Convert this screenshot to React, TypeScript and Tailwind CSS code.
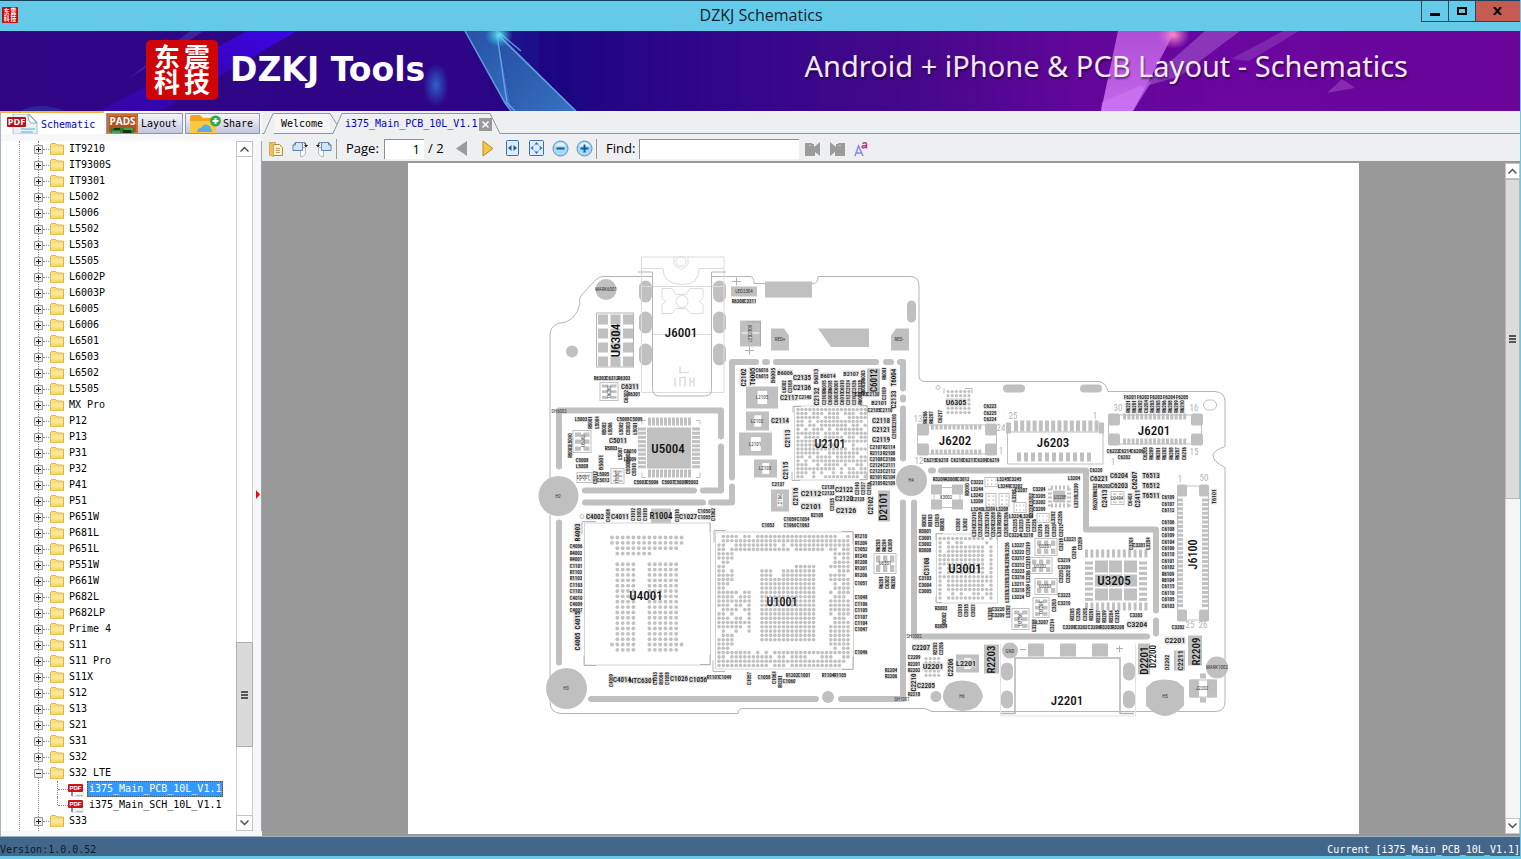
import React from 'react';

const TREE = [
  'IT9210', 'IT9300S', 'IT9301', 'L5002', 'L5006', 'L5502', 'L5503', 'L5505', 'L6002P', 'L6003P', 'L6005', 'L6006',
  'L6501', 'L6503', 'L6502', 'L5505', 'MX Pro', 'P12', 'P13', 'P31', 'P32', 'P41', 'P51', 'P651W', 'P681L', 'P651L',
  'P551W', 'P661W', 'P682L', 'P682LP', 'Prime 4', 'S11', 'S11 Pro', 'S11X', 'S12', 'S13', 'S21', 'S31', 'S32',
];

/* ---------- icons ---------- */

function FolderIcon() {
  return (
    <svg width="14" height="13" viewBox="0 0 14 13" className="shrink-0">
      <path d="M.5 11.5v-10l1-1h4l1.500 1.500h6.500v9.500z" fill="#f7dc7c" stroke="#dcb748" />
      <path d="M1 4.500h12v6.500H1z" fill="#fbe795" />
      <path d="M1 8.500h12v3H1z" fill="#f3d163" opacity=".7" />
    </svg>
  );
}

function PdfIcon({ small }: { small?: boolean }) {
  return small ? (
    <svg width="17" height="16" viewBox="0 0 17 16" className="shrink-0">
      <path d="M4 8h11v7.500H4z" fill="#eef6fa" stroke="#d5e4ea" />
      <path d="M8 14.500h7" stroke="#8fc6e0" />
      <path d="M4 10v5" stroke="#333" />
      <rect x="0" y="3" width="15" height="8" rx="1" fill="#c4161c" />
      <text x="7.500" y="9" fontSize="6" fontWeight="bold" fill="#fff" textAnchor="middle" className="font-['Liberation_Sans',sans-serif]">PDF</text>
    </svg>
  ) : (
    <svg width="32" height="20" viewBox="0 0 32 20" className="shrink-0">
      <path d="M6 0h16l8 8v12H6z" fill="#e9f1f6" stroke="#a8c0cc" />
      <path d="M21 0l9 9h-6q-3-1-3-9" fill="#fdfefe" stroke="#8aa9b8" />
      <path d="M14 15h14M14 18h12" stroke="#9fd0e6" strokeWidth="2" />
      <rect x="0" y="3" width="19" height="10" rx="1" fill="#b5121b" />
      <text x="9.500" y="11" fontSize="9" fontWeight="bold" fill="#fff" textAnchor="middle" className="font-['Open_Sans',sans-serif]">PDF</text>
    </svg>
  );
}

function PadsIcon() {
  return (
    <svg width="31" height="20" viewBox="0 0 31 20" className="shrink-0">
      <path d="M0 0h31v20H0z" fill="#b5511d" />
      <path d="M1 1h29v18H1z" fill="none" stroke="#d98a4f" />
      <text x="15.500" y="11" fontSize="10" fontWeight="bold" fill="#fff" textAnchor="middle" className="font-['Open_Sans',sans-serif]">PADS</text>
      <path d="M4 20v-6h23v6z" fill="#2d7a2a" />
      <path d="M7 14h6v2H7zM16 16h8v4h-8z" fill="#143314" />
      <path d="M5 18h8M17 15h9" stroke="#6fc45c" />
    </svg>
  );
}

function CloudFolderIcon() {
  return (
    <svg width="32" height="20" viewBox="0 0 32 20" className="shrink-0">
      <path d="M1 3q0-2 2-2h8l3 3h11q2 0 2 2v14H1z" fill="#f3a51f" />
      <path d="M1 7h26v13H1z" fill="#ffc83d" />
      <path d="M8 18q0-4 4-4 2-5 7-3 3 1 3 4 2 1 1 3z" fill="#5aaee8" />
      <circle cx="26.500" cy="7" r="5.500" fill="#35a852" />
      <path d="M26.500 4v6M23.500 7h6" stroke="#fff" strokeWidth="2" />
    </svg>
  );
}

function OpenIcon() {
  return (
    <svg width="16" height="16" viewBox="0 0 16 16">
      <path d="M1.500 1.500h6v13h-6z" fill="#f4cf7d" stroke="#dba950" />
      <path d="M5.500 3.500h6l3 3v8h-9z" fill="#fdf3d6" stroke="#b08b4a" />
      <path d="M8 7.500h4M8 9.500h4M8 11.500h4" stroke="#c49b55" />
      <path d="M1.500 1.500l4 2v12l-4-1.500z" fill="#f0be5c" stroke="#dba950" />
    </svg>
  );
}

function RotateIcon({ flip }: { flip?: boolean }) {
  return (
    <svg width="18" height="16" viewBox="0 0 18 16" className={flip ? '-scale-x-100' : ''}>
      <path d="M9.500 6.500h5v6l-2.500 3H9.500z" fill="#fafafa" stroke="#b5b5b5" />
      <path d="M4.500 1.500h7v8h-9.500v-5.500z" fill="#cfe4f8" stroke="#5f86b3" />
      <path d="M2 4h2.500v-2.500" fill="none" stroke="#5f86b3" />
      <path d="M12.500 1.500q2.500 0 2.500 3" fill="none" stroke="#222" />
      <path d="M13 4h4l-2 2.500z" fill="#222" />
    </svg>
  );
}

function TriIcon({ right }: { right?: boolean }) {
  return right ? (
    <svg width="12" height="17" viewBox="0 0 12 17">
      <path d="M1 1l10 7.500L1 16z" fill="#f3c544" stroke="#b88a22" />
    </svg>
  ) : (
    <svg width="12" height="17" viewBox="0 0 12 17">
      <path d="M11 1v15L0 8.500z" fill="#9b9b9b" />
    </svg>
  );
}

function FitIcon({ page }: { page?: boolean }) {
  return (
    <svg width="15" height="17" viewBox="0 0 15 17">
      <rect x={page ? 0.5 : 1.5} y=".5" width={page ? 14 : 12} height="15" rx="1" fill="#dcecfb" stroke="#3f6ea3" />
      {page ? (
        <>
          <path d="M7.500 2l2 2.500h-4zM7.500 14l2-2.500h-4zM1.500 8l2.500-2v4zM13.500 8L11 6v4z" fill="#2d6da8" />
          <circle cx="7.500" cy="8" r="3.500" fill="none" stroke="#6f9ccb" strokeDasharray="2 1" />
        </>
      ) : (
        <path d="M3 8l3.500-3v6zM12 8L8.500 5v6z" fill="#1c5f9e" />
      )}
    </svg>
  );
}

function ZoomIcon({ plus }: { plus?: boolean }) {
  return (
    <svg width="17" height="17" viewBox="0 0 17 17">
      <circle cx="8.500" cy="8.500" r="7.500" fill="#a9d9f7" stroke="#5f8fb8" />
      <path d="M3 6q5.500-7 11 0z" fill="#e4f4fd" />
      <path d={plus ? 'M4.500 8.500h8M8.500 4.500v8' : 'M4.500 8.500h8'} stroke="#0d5f9e" strokeWidth="2" />
    </svg>
  );
}

function FindIcon({ next }: { next?: boolean }) {
  return (
    <svg width="16" height="16" viewBox="0 0 16 16" className={next ? '-scale-x-100' : ''}>
      <path d="M0 2h7v1h2v3l6-5v14l-5-4v4H0z" fill="#9b9b9b" />
      <path d="M4 4h2v1H4z" fill="#c9c9c9" />
    </svg>
  );
}

function SealLogo({ small }: { small?: boolean }) {
  return (
    <svg width={small ? 16 : 72} height={small ? 16 : 60} viewBox="0 0 72 60" preserveAspectRatio="none" className="shrink-0 overflow-visible">
      <rect width="72" height="60" rx="5" fill="#cf0406" />
      <g fill="#fff" fontWeight="700" fontSize="26" textAnchor="middle" className="font-['Noto_Sans_CJK_SC',sans-serif]">
        <text x="21" y="27">东</text>
        <text x="51" y="27">震</text>
        <text x="21" y="52">科</text>
        <text x="51" y="52">技</text>
      </g>
    </svg>
  );
}

/* ---------- window chrome ---------- */

function TitleBar() {
  return (
    <header className="flex h-[31px] shrink-0 items-start border-t border-[#17405a] bg-[#65cae8]">
      <div className="flex flex-1 pl-[2px] pt-[6px]"><SealLogo small /></div>
      <h1 className="pt-[3px] font-['Open_Sans',sans-serif] text-[16px] leading-[22px] text-[#10242e]">DZKJ Schematics</h1>
      <div className="flex flex-1 justify-end">
        <button aria-label="Minimize" className="flex h-[21px] w-[28px] items-center justify-center border border-t-0 border-[#274a58]">
          <svg width="10" height="10"><path d="M0 7h10v3H0z" /></svg>
        </button>
        <button aria-label="Maximize" className="flex h-[21px] w-[26px] items-center justify-center border-b border-[#274a58]">
          <svg width="10" height="8"><path d="M1 1h8v6H1z" fill="none" stroke="#000" strokeWidth="2" /></svg>
        </button>
        <button aria-label="Close" className="flex h-[21px] w-[45px] items-center justify-center border-b border-l border-[#274a58] bg-[#c75b52]">
          <svg width="10" height="8"><path d="M1 0l7 8M8 0L1 8" stroke="#000" strokeWidth="2" /></svg>
        </button>
      </div>
    </header>
  );
}

function Banner() {
  return (
    <div className="relative flex h-20 shrink-0 items-center overflow-hidden">
      <svg viewBox="0 0 1520 80" preserveAspectRatio="none" className="absolute inset-0 h-full w-full">
        <defs>
          <linearGradient id="bg">
            <stop offset="0" stopColor="#300685" />
            <stop offset=".31" stopColor="#2d0585" />
            <stop offset=".37" stopColor="#1b0680" />
            <stop offset=".44" stopColor="#2c0588" />
            <stop offset=".6" stopColor="#45088a" />
            <stop offset=".72" stopColor="#64069a" />
            <stop offset=".8" stopColor="#6b06a0" />
            <stop offset="1" stopColor="#6a0598" />
          </linearGradient>
          <linearGradient id="beam" x1="1" y1="0" x2="0" y2="1">
            <stop offset="0" stopColor="#3c05e6" />
            <stop offset=".6" stopColor="#3604b0" />
            <stop offset="1" stopColor="#3606a8" />
          </linearGradient>
          <linearGradient id="teal" x1="0" y1="0" x2="1" y2="1">
            <stop offset="0" stopColor="#2b4fa8" />
            <stop offset=".5" stopColor="#2c5fae" />
            <stop offset="1" stopColor="#3a72c4" />
          </linearGradient>
          <linearGradient id="pink" x1="0" y1="0" x2="0" y2="1">
            <stop offset="0" stopColor="#b04fd6" />
            <stop offset="1" stopColor="#c468ec" />
          </linearGradient>
          <radialGradient id="glow"><stop offset="0" stopColor="#2f6ed0" stopOpacity=".9" /><stop offset="1" stopColor="#2f5ed0" stopOpacity="0" /></radialGradient>
          <radialGradient id="spark"><stop offset="0" stopColor="#63e0ee" /><stop offset="1" stopColor="#3ec6ee" stopOpacity="0" /></radialGradient>
          <radialGradient id="rose"><stop offset="0" stopColor="#ff8bc8" /><stop offset="1" stopColor="#e070d8" stopOpacity="0" /></radialGradient>
        </defs>
        <path d="M0 0h1520v80H0z" fill="url(#bg)" />
        <path d="M247 0h50L160 80h-60z" fill="url(#beam)" />
        <path d="M190 0h14l-76 48z" fill="#4b32a8" opacity=".6" />
        <path d="M465 0h32l15 80L505 72z" fill="url(#teal)" />
        <path d="M497 0l79 80h-64z" fill="url(#teal)" />
        <path d="M497 0l42 0 0 42z" fill="#1a1590" opacity=".6" />
        <path d="M465 0l40 72 6 8M497 3l10 69 8 8M497 3l79 77M497 0l24 20" fill="none" stroke="#6fb4f0" strokeWidth="1.500" opacity=".8" />
        <ellipse cx="436" cy="54" rx="13" ry="22" fill="url(#glow)" />
        <ellipse cx="499" cy="4" rx="14" ry="12" fill="url(#spark)" />
        <path d="M20 80q20-10 45 0z" fill="#2a5fb0" opacity=".35" />
        <path d="M1118 0h57l-42 80h-32z" fill="url(#pink)" />
        <path d="M1102 71l50-21-19 30h-32z" fill="#cf78f5" opacity=".6" />
        <path d="M1205 0h35l-60 45-40 12z" fill="#a55fce" opacity=".55" />
        <path d="M1283 0h16l-50 30-18-2z" fill="#a55fce" opacity=".35" />
        <path d="M1342 48l13 9-28 5z" fill="#9a45bd" opacity=".6" />
        <ellipse cx="1174" cy="4" rx="16" ry="14" fill="url(#rose)" />
      </svg>
      <div className="relative flex w-full items-center pb-[2px] pl-[146px] pr-[112px]">
        <SealLogo />
        <span className="ml-[12px] font-['DejaVu_Sans',sans-serif] text-[33px] font-bold leading-10 text-white">DZKJ Tools</span>
        <span className="ml-auto pb-[8px] font-['Noto_Sans',sans-serif] text-[29px] leading-9 text-[#f4e9fb] [text-shadow:1px_2px_2px_#00000080]">
          Android + iPhone &amp; PCB Layout - Schematics
        </span>
      </div>
    </div>
  );
}

function ArrowButton({ down }: { down?: boolean }) {
  return (
    <button aria-label={down ? 'Scroll down' : 'Scroll up'} className="flex h-[16px] w-full shrink-0 items-center justify-center border border-[#c4c4c4] bg-white">
      <svg width="9" height="6"><path d={down ? 'M.5 .5l4 4 4-4' : 'M.5 5.500l4-4 4 4'} fill="none" stroke="#505050" strokeWidth="1.500" /></svg>
    </button>
  );
}

function Grip() {
  return <svg width="7" height="8"><path d="M0 1h7M0 4h7M0 7h7" stroke="#555" strokeWidth="2" /></svg>;
}

function TreeRow({ label, open }: { label?: string; open?: boolean }) {
  return (
    <li className="flex h-4 items-center">
      <button aria-label={open ? 'Collapse' : 'Expand'} className="ml-[34px] shrink-0 bg-white">
        <svg width="9" height="9">
          <path d="M.5 .5h8v8h-8z" fill="#eee" stroke="#999" />
          <path d={open ? 'M2 4.500h5' : 'M2 4.500h5M4.500 2v5'} stroke="#222" />
        </svg>
      </button>
      <span className="mr-px w-[6px] border-t border-dotted border-[#888]" />
      <FolderIcon />
      <span className="ml-[5px] whitespace-pre">{label}</span>
    </li>
  );
}

function FileRow({ label, selected, last }: { label: string; selected?: boolean; last?: boolean }) {
  return (
    <li className="flex h-4 items-center">
      <span className={`ml-[57px] w-0 self-start border-l border-dotted border-[#888] ${last ? 'h-2' : 'h-4'}`} />
      <span className="w-[10px] border-t border-dotted border-[#888]" />
      <PdfIcon small />
      {selected ? (
        <span className="ml-[2px] border border-dotted border-[#7a4b10] bg-[#3399ff] px-px leading-[14px] text-white">{label}</span>
      ) : (
        <span className="ml-1">{label}</span>
      )}
    </li>
  );
}

function Sidebar() {
  const tab = 'flex items-center overflow-hidden border border-[#8c97b0] bg-gradient-to-b from-[#f6f6fa] to-[#c4c6dc]';
  return (
    <aside className="flex w-[262px] shrink-0 flex-col bg-[#f7f7fa]">
      <div className="flex h-[23px] shrink-0 items-end gap-[2px] text-[10px]">
        <button className="flex h-[23px] w-[104px] items-center gap-[2px] overflow-hidden border-l border-t-2 border-l-[#a9b4bf] border-t-[#f5b13d] bg-white pl-[6px] pt-px text-[#0000c8]">
          <PdfIcon />Schematic
        </button>
        <button className={`${tab} h-[21px] w-[77px] gap-[3px]`}><PadsIcon />Layout</button>
        <button className={`${tab} h-[21px] w-[75px] gap-[2px] pl-[3px]`}><CloudFolderIcon />Share</button>
      </div>
      <div className="flex min-h-0 flex-1 border-l border-[#a9b4bf] pb-[5px] pt-[7px]">
        <div className="relative -ml-px min-w-0 flex-1 overflow-hidden border-l border-[#a9b4bf] bg-white text-[10px] leading-4">
          <span className="absolute inset-y-0 left-[18px] border-l border-dotted border-[#888]" />
          <span className="absolute inset-y-0 left-[37px] border-l border-dotted border-[#888]" />
          <ul className="absolute inset-x-0 -left-px top-0">
            {TREE.map((t, i) => <TreeRow key={i} label={t} />)}
            <TreeRow label="S32 LTE" open />
            <FileRow label="i375_Main_PCB_10L_V1.1" selected />
            <FileRow label="i375_Main_SCH_10L_V1.1" last />
            <TreeRow label="S33" />
            <TreeRow />
          </ul>
        </div>
        <div className="flex w-[17px] shrink-0 flex-col bg-white">
          <ArrowButton />
          <div className="grow-[487] basis-0 border-x border-[#d0d0d0]" />
          <div className="flex grow-[104] basis-0 items-center justify-center border border-[#b0b0b0] bg-[#dadada]"><Grip /></div>
          <div className="grow-[68] basis-0 border-x border-[#d0d0d0]" />
          <ArrowButton down />
        </div>
        <div className="flex w-[9px] shrink-0 items-center justify-end border-r border-[#9aa7b0] pt-4">
          <svg width="6" height="9"><path d="M1 0l4 4.500L1 9z" fill="#e01010" /></svg>
        </div>
      </div>
    </aside>
  );
}

function DocTabs() {
  return (
    <div className="flex h-[23px] shrink-0 items-end text-[10px] leading-5">
      <svg width="12" height="21" className="shrink-0"><path d="M0 20.500h2L11 .5h1" fill="#f5f5f5" stroke="#8799a3" /></svg>
      <button className="h-[21px] w-[56px] whitespace-nowrap border-y border-[#8799a3] bg-[#f5f5f5] pl-[7px] text-left text-black">Welcome</button>
      <svg width="13" height="21" className="shrink-0">
        <path d="M0 .5l7 11" fill="none" stroke="#8799a3" />
        <path d="M0 20.500h3L12 .5h1" fill="none" stroke="#8799a3" />
      </svg>
      <div className="flex h-[21px] w-[147px] items-center gap-[2px] border-t border-[#8799a3] pl-[2px] text-[#0000c8]">
        <button className="whitespace-nowrap">i375_Main_PCB_10L_V1.1</button>
        <button aria-label="Close tab" className="flex h-[13px] w-[13px] shrink-0 items-center justify-center bg-[#999]">
          <svg width="7" height="7"><path d="M.5 .5l6 6M6.500 .5l-6 6" stroke="#fff" strokeWidth="1.500" /></svg>
        </button>
      </div>
      <svg width="13" height="21" className="shrink-0"><path d="M0 .5l10 20h3" fill="none" stroke="#8799a3" /></svg>
      <div className="flex-1 border-b border-[#8799a3]" />
    </div>
  );
}

function Tool({ label, children }: { label: string; children: React.ReactNode }) {
  return <button aria-label={label} className="flex h-6 w-6 shrink-0 items-center justify-center">{children}</button>;
}

function Toolbar() {
  return (
    <div className="flex h-[29px] shrink-0 items-center border-b-2 border-[#999] pl-[2px] pt-[2px] font-['Open_Sans',sans-serif] text-[13px] text-black">
      <Tool label="Open"><OpenIcon /></Tool>
      <Tool label="Rotate right"><RotateIcon /></Tool>
      <Tool label="Rotate left"><RotateIcon flip /></Tool>
      <span className="h-5 w-px bg-[#999]" />
      <label htmlFor="page" className="ml-[9px] w-[38px]">Page:</label>
      <input id="page" defaultValue="1" className="h-5 w-10 border-l border-t border-[#8d8d8d] bg-white pr-1 text-right outline-none" />
      <span className="ml-[4px] w-[18px] whitespace-nowrap">/ 2</span>
      <span className="w-1" />
      <Tool label="Previous page"><TriIcon /></Tool>
      <span className="w-[2px]" />
      <Tool label="Next page"><TriIcon right /></Tool>
      <Tool label="Fit width"><FitIcon /></Tool>
      <Tool label="Fit page"><FitIcon page /></Tool>
      <Tool label="Zoom out"><ZoomIcon /></Tool>
      <Tool label="Zoom in"><ZoomIcon plus /></Tool>
      <span className="h-5 w-px bg-[#999]" />
      <label htmlFor="find" className="ml-[9px] w-[33px]">Find:</label>
      <input id="find" className="h-5 w-40 border-l border-t border-[#8d8d8d] bg-white px-1 outline-none" />
      <span className="w-[2px]" />
      <Tool label="Find previous"><FindIcon /></Tool>
      <Tool label="Find next"><FindIcon next /></Tool>
      <Tool label="Match case">
        <svg width="14" height="16" viewBox="0 0 14 16">
          <path d="M1 15L4.500 5 9 15M2.500 12h5" fill="none" stroke="#8a86e8" strokeWidth="1.500" />
          <path d="M8.500 2.500q4-2 4 1v4M12 4.500q-4 0-4 1.500 1 2 4 0" fill="none" stroke="#b23a9a" strokeWidth="1.500" />
        </svg>
      </Tool>
    </div>
  );
}

/* ---------- board drawing ---------- */

const G = '#c0c0c0';

const SLOTS = [
  'M559 466V410H721V436', 'M721 446V490H703', 'M585 490H694', 'M585 502H703', 'M711 502H732V486', 'M732 477V361.500H756',
  'M765 361.500h2', 'M776 361.500H876', 'M886 361.500h5', 'M900 361.500H903V388', 'M903 397v2', 'M903 408V458',
  'M559 522V662', 'M591 698.500H816', 'M841 698.500H903', 'M903 502V698', 'M914 502V636H1147', 'M931 470h2', 'M941 470H1086V529H1156V610',
  'M1156 620V633',
];

/* x, y, size, vertical, name */
const BIG = `681 332 13 0 J6001
615 340 13 1 U6304
668 448 13 0 U5004
830 443 12 0 U2101
646 595 13 0 U4001
782 601 12 0 U1001
965 568 13 0 U3001
1114 580 13 0 U3205
955 440 13 0 J6202
1053 442 13 0 J6203
1154 430 13 0 J6201
1193 554 12 1 J6100
1067 700 13 0 J2201
956 402 8 0 U6305
933 666 8 0 U2201
966 663 8 0 L2201
883 506 11 1 D2101
991 659 11 1 R2203
1196 651 11 1 R2209
1144 660 11 1 D2201
1153 656 9 1 D2200
1180 660 8 1 C2211
1167 662 6 1 D2202
1175 640 8 0 C2201
1137 624 8 0 C3204
661 515 9 0 R1004
595 516 7 0 C4002
620 516 7 0 C4011
688 516 7 0 C1027
874 380 9 1 C6012
893 377 7 1 T6004
893 399 7 1 C2133
743 377 7 1 C2102
752 376 7 1 T6005
773 375 6 1 B6005
785 372 6 0 B6006
802 377 7 0 C2135
802 387 7 0 C2136
789 397 7 0 C2117
816 396 7 1 C2132
816 376 6 1 B6013
828 375 6 0 B6014
851 373 6 0 B2107
780 420 7 0 C2114
787 438 7 1 C2113
785 470 7 1 C2115
795 496 7 1 C2116
881 420 7 0 C2118
881 429 7 0 C2121
881 439 7 0 C2119
879 402 6 0 B2101
811 493 8 0 C2112
811 506 8 0 C2101
844 489 7 0 C2122
844 498 7 0 C2120
846 510 8 0 C2126
870 505 7 1 C2102
630 386 7 0 C6311
618 440 7 0 C5011
601 462 6 1 B5001
577 532 7 1 R4003
577 620 7 1 C4015
577 641 7 1 C4005
622 679 7 0 C4014
642 680 7 0 NTC6301
679 678 7 0 C1026
698 679 7 0 C1056
1099 478 7 0 C6221
1119 475 7 0 C6204
1119 485 7 0 C6203
1134 480 7 1 C6207
1151 475 7 0 T6513
1151 485 7 0 T6512
1151 495 7 0 T6511
1104 498 7 1 C2413
1137 498 7 1 C2411
1095 502 6 1 R6201
1214 496 6 1 T6101
926 566 7 1 C3108
921 647 7 0 C2207
950 667 7 1 C2206
926 685 7 0 C2205
913 682 7 1 C2210`;

/* x, y, dx, dy, vertical, names */
const SMALL = `600 378 12 0 0 R6303 C6312 R6303
626 396 0 0 1 C6302
634 394 0 0 0 R6301
738 301 12 0 0 R6300 C3311
623 419 13 0 0 C5008 C5009
581 419 0 0 0 L5003
590 422 7 0 1 R5001 L5004
621 428 7 0 1 L5002 C5003 L5001
604 428 6 0 1 R5002 L5006
570 439 0 12 1 L5010 R5002
582 460 0 6 0 C5008 L5008
611 448 0 0 0 R5003
620 453 8 4 1 L5007 C5002
630 451 0 8 0 C5010 L5009
603 474 0 6 0 L5005 C5013
595 477 0 0 1 C5012
628 467 6 2 1 C5004 C5010
640 482 12 0 0 C5003 C5006
668 482 12 0 0 C5007 C5008 R5003
762 370 0 6 0 C6016 C6015
784 386 6 0 1 L6002 C2108
805 397 0 0 0 C2140
824 386 6 0 1 R6015 R6018 C6001 C6010
824 398 6 0 1 C2101 C6002 C6007 C6010
848 386 6 0 1 C2124 C2126 C2128
848 398 6 0 1 C2127 C2102 R6008
863 376 0 12 1 R6003 R6002
884 373 0 20 1 R6001 C2109
861 394 12 0 0 C2123 C2130
874 410 12 0 0 C2105 C2110
894 420 0 12 1 C2100 C2103
876 447 0 6 0 C2107 R2113 C2108 C2124 C2123 R2101 C2105
889 447 0 6 0 R2114 R2108 C2106 C2111 C2112 R2104 R2109
828 487 0 6 0 C2138 C2133
857 488 6 0 1 C2140 C2127 C2126
858 499 0 0 0 C2128
832 504 0 0 1 C2125
778 484 0 0 0 C2137
790 519 13 0 0 C1059 C1054
790 525 13 0 0 C1060 C1063
768 525 0 0 0 C1053
817 515 0 0 0 R2108
608 515 0 0 1 C4008
633 514 6 0 1 C1012 C1003 C1010
677 515 0 0 1 C1010
704 511 0 6 0 C1050 C1055
713 514 0 0 1 C1062
576 546 0 6.4 0 C4006 R4002 R4001 C1101 R1102 R1103 C1103 C1102 C4010 C4009 C4007
611 680 0 0 1 C4009
655 678 6 0 1 C1013 R1004 C1058
713 677 12 0 0 R1101 C1049
749 678 0 0 1 C1057
764 677 0 0 0 C1058
774 677 6 4 1 C1061 R1201
792 675 12 0 0 R1202 C1001
789 681 0 0 0 C1060
828 675 12 0 0 R1104 R1105
861 536 0 6.4 0 R1210 R1209 C1052 R1245 R1208 R1201 R1206
861 583 0 0 0 C1051
861 597 0 6.4 0 C1048 C1106 C1105 C1107 C1104 C1047
861 652 0 0 0 C1046
878 545 6 0 1 R6203 R6204 C6308
881 582 6 0 1 R6201 C6302 R6203
891 670 0 6 0 R2204 R2206
925 417 6 0 1 R6206 R6207
940 416 0 0 1 C6217
990 406 0 6.5 0 C6223 C6225 C6224
930 460 12 0 0 C6215 C6218
957 460 12 0 0 C6210 C6211 C6209 C6219
1130 397 13 0 0 F6201 F6202 F6203 F6204 F6205
1128 406 6 0 1 R6221 R6201 R6202 C6204 R6203 R6205 R6206 R6208 R6209 R6210
1113 451 12 0 0 C6222 C6214 C6206
1124 457 0 0 0 C6202
1145 453 6.5 0 1 C6205 R6209 R6201 R6202 R6208 R6207 C6216
1168 497 0 6.5 0 C6109 C6107 C6112
1168 522 0 6.4 0 C6106 C6108 C6109 C6104 C6106 C6110 C6101 C6102 R6109 R6104 C6115 C6110 C6105 C6103
1096 470 0 0 0 C6220
1095 489 0 0 1 R6202
1104 486 0 0 0 R6202
1130 499 0 0 1 C6401
939 479 12 0 0 R3209 R3008 C3012
967 489 0 0 1 R3010
977 482 0 6.5 0 C3222 L3244 L3243
1003 479 12 0 0 L3245 C3245
1004 486 12 0 0 L3249 C3202
977 501 0 8 0 L3209 L3240
989 509 13 0 0 L3209 L3208
974 518 6.4 0 1 C3210 C3209 C3210 C3208 R3209 C3206
974 530 6.4 0 1 L3242 C3232 L3225 C3209 L3207 C3208
924 520 6.4 0 1 R3002 R3103 C3103
942 524 0 0 1 R3003
958 524 7 0 1 C3001 L3002
925 531 0 6.3 0 R3001 C3001 C3002 R3008
925 578 0 6.3 0 C3103 C3004 C3005
941 608 0 18 0 R3003 R3004
944 618 0 0 1 R3002
960 610 6.4 0 1 C3018 C3015 C3021
990 613 0 0 1 L3208
998 609 0 6 0 C3220 C3209
1008 611 0 0 1 L3202
1015 516 12 0 0 L3224 L3204
1015 525 6.4 0 1 C3225 L3223 C3214 C3226
1015 535 12 0 0 C3224 L3218
1018 545 0 6.4 0 L3227 L3222 C3217 C3212 C3223 C3216 L3211 C3218 L3224
1007 548 0 12 1 L3226 L3209 L3204 L3205 L3203
1028 548 0 14 1 C3219 C3215 L3206 C3209
1014 495 0 0 1 L3205
1021 490 0 0 0 C3207
1031 499 0 12 1 C3202 C3220
1039 489 0 6.4 0 C3204 C3205 C3202 C3209
1074 478 0 0 0 L3204
1076 489 0 12 1 L3239 L3218
1053 517 7 0 1 L3202 C3206
1040 530 7 0 1 C3216 L3228 C3230 C3212
1061 544 0 0 1 C3218
1070 539 0 0 0 L3221
1074 552 6 -9 1 C3216 C3209
1064 560 0 7 0 C3219 C3209
1061 576 7 0 1 C3220 C3202
1064 595 0 8 0 C3223 C3210
1054 605 0 0 1 C3203
1042 622 0 0 0 L3207
1034 625 18 0 1 L3208 C3214
1131 543 17 0 1 C3201 L3204
1139 545 0 0 0 C3201
1072 614 6.4 0 1 R3205 C3206 C3205 R3201
1069 627 12 0 0 C3208 C3202
1098 616 6.4 0 1 R3207 R3209 R3204 C3215
1094 627 12 0 0 C3206 R3203 R3208
1136 615 0 0 0 C3203
1178 627 0 0 0 C3202
914 657 0 6.4 0 C2209 R2201 R2202
935 648 6 0 1 R2202 C2206
914 694 0 0 0 R2218`;

function Label({ x, y, s, v, t }: { x: number; y: number; s: number; v: boolean; t: string }) {
  return (
    <text x={x} y={y + s * 0.36} fontSize={s} textAnchor="middle" transform={v ? `rotate(-90 ${x} ${y})` : undefined}>{t}</text>
  );
}

function Balls({ x, y, cols, rows, step, r = 1.6, keep }: { x: number; y: number; cols: number; rows: number; step: number; r?: number; keep?: (c: number, r: number) => boolean }) {
  const dots: React.ReactNode[] = [];
  for (let j = 0; j < rows; j++)
    for (let i = 0; i < cols; i++)
      if (!keep || keep(i, j)) dots.push(<circle key={`${i}-${j}`} cx={x + i * step} cy={y + j * step} r={r} />);
  return <g fill={G}>{dots}</g>;
}

function Pins({ x, y, n, dx = 0, dy = 0, w, h }: { x: number; y: number; n: number; dx?: number; dy?: number; w: number; h: number }) {
  return <g fill={G}>{Array.from({ length: n }, (_, i) => <rect key={i} x={x + i * dx} y={y + i * dy} width={w} height={h} />)}</g>;
}

const noise = (i: number, j: number) => (((i * 7919 + j * 10473 + i * i * 31 * (j + 2) + j * j * 17) % 97) / 97);

function socKeep(i: number, j: number) {
  const d = Math.min(i, j, 30 - i, 30 - j);
  if (i >= 10 && i <= 22 && j >= 10 && j <= 24) return true;
  if (j >= 8 && j < 10) {
    if (i >= 10 && i <= 22) return i > 14 || i < 13;
  }
  if (j === 7 && i > 17 && i < 23) return true;
  if (d < 4) return d === 1 || noise(i, j) > 0.2;
  if (i < 8 && j > 12 && j < 23) return i === 7 || noise(i, j) > 0.35;
  if (i > 25 && j > 5 && j < 26) return noise(i, j) > 0.2;
  return false;
}

function memKeep(i: number, j: number) {
  if (j < 2) return true;
  if (j === 2) return i > 0 && i < 13;
  if (j === 3) return i > 0 && i < 8;
  if (j === 4) return false;
  if (j === 20) return i < 5 || i > 6;
  return (i > 0 && i < 5) || (i > 6 && i < 13);
}

function MiniChip({ x, y, w, h }: { x: number; y: number; w: number; h: number }) {
  const nx = w > h ? 3 : 2;
  const ny = w > h ? 2 : 3;
  return (
    <g>
      <rect x={x} y={y} width={w} height={h} fill="none" stroke={G} />
      {Array.from({ length: nx * ny }, (_, k) => (
        <rect key={k} x={x + 2 + (k % nx) * ((w - 1) / nx)} y={y + 2 + Math.floor(k / nx) * ((h - 1) / ny)} width={w / nx - 3} height={h / ny - 3} fill={G} />
      ))}
    </g>
  );
}

function Board() {
  const big = BIG.split('\n').map((l) => l.split(' '));
  const small = SMALL.split('\n').flatMap((l) => {
    const [x, y, dx, dy, v, ...names] = l.split(' ');
    return names.map((t, i) => ({ x: +x + i * +dx, y: +y + i * +dy, v: v === '1', t }));
  });
  const inductors = [[746, 386, 32, 22], [746, 411, 23, 19], [739, 432, 33, 23], [754, 459, 23, 18], [771, 489, 18, 22], [956, 654, 23, 18]];
  return (
    <svg viewBox="408 163 951 670" className="h-full w-full font-['Liberation_Sans_Narrow','Roboto_Condensed','Liberation_Sans',sans-serif]" role="img" aria-label="Board layout">
      <path d="M550 478V334Q550 326 558 323Q576 322 580 303Q578 298 583 293L596 279Q599 276 604 276H652M712 276H750Q754 276 754 283H813Q818 283 818 276H910Q919 276 919 285V375Q919 381 925 381H1099Q1106 382 1108 391H1215Q1225 392 1225 401V446Q1213 450 1213 455Q1213 461 1225 467V701Q1225 711 1215 711H932L925 708H743Q738 708 738 713H562Q550 713 550 701V514" fill="none" stroke="#b4b4b4" />
      <g stroke={G} strokeWidth="6" strokeLinecap="round" strokeLinejoin="round" fill="none">
        {SLOTS.map((d) => <path key={d} d={d} />)}
      </g>
      <g fill={G}>
        <circle cx="558.500" cy="495.500" r="20" /><circle cx="566.500" cy="688" r="20.500" /><circle cx="911.500" cy="480" r="15.500" />
        <circle cx="606" cy="289" r="10.500" /><circle cx="572" cy="351" r="6" /><circle cx="828" cy="696.500" r="6" />
        <circle cx="1010" cy="650" r="8" /><circle cx="936" cy="696" r="5.500" /><circle cx="1217" cy="667" r="11" />
        <path d="M949 683q13-6 27 0q6 6 7 13q-1 5-7 11q-13 7-27 0q-6-6-6-11q0-7 6-13zM1153 681q11-4 24 0l7 6v18q-19 21-38 0v-18z" />
        <rect x="765" y="281" width="47" height="16" /><rect x="731" y="286" width="26" height="10" />
        <rect x="907" y="300" width="9" height="22" rx="4.500" />
        <path d="M771 328h13l5 7v15h-18zM896 328h13v22h-18v-15zM818 328h51v18.500h-38z" />
        <rect x="1003" y="384" width="22" height="8" rx="4" /><rect x="1080" y="384" width="22" height="8" rx="4" />
        {inductors.map(([x, y, w, h]) => <rect key={y} x={x} y={y} width={w} height={h} />)}
        {[291, 322, 354].map((y) => <g key={y}><rect x="639" y={y - 11} width="13" height="22" rx="6.500" /><rect x="713" y={y - 11} width="13" height="22" rx="6.500" /></g>)}
        {[671, 699].map((y) => <g key={y}><rect x="1001" y={y - 9} width="12" height="18" rx="6" /><rect x="1123" y={y - 9} width="12" height="18" rx="6" /></g>)}
        <rect x="740" y="320" width="21" height="26" />
        <path d="M1028 643h16v13h-16zM1060 643h16v13h-16zM1092 643h16v13h-16z" />
        <path d="M651 508h20v15h-20zM878 490h12v31h-12zM984 644h15v29h-15zM1188 635h14v30h-14zM1138 643h12v31h-12zM867 368h13v24h-13zM1174 650h11v20h-11z" />
      </g>
      <g fill="#fff">
        {inductors.map(([x, y, w, h]) => <rect key={y} x={x + w * 0.36} y={y + h * 0.2} width={w * 0.3} height={h * 0.6} />)}
        <path d="M742 332h17v1h-17z" />
      </g>
      <path d="M746 321.500h14.500v24" fill="none" stroke="#aaa" />

      {/* J6001 audio jack */}
      <g fill="none" stroke="#dcdcdc">
        <path d="M641.500 256.500h82.500v135.500h-82.500zM641 286h83M653 334h59M641 268h22q0 15 18 16t18-16h25M674 256v8l7 5 7-5v-8M662 288h10l4 6h10l4-6h13v10l-4 3 4 3v9h-13l-4-5h-10l-4 5h-10v-9l4-3-4-3z" />
        <circle cx="681" cy="261" r="5" /><circle cx="682" cy="301" r="6" />
        <path d="M680 366v6h9M675 377v9M680 386v-9h5v9M690 377v9M694 377v9M690 381h4" strokeWidth="1.500" />
      </g>
      <path d="M638 271.500H652.500V388Q652.500 395.500 660 395.500H705Q711.500 395.500 711.500 388V271.500H726" fill="none" stroke="#b4b4b4" />
      <path d="M732 281h9M736.500 277v8M745 350h9M749.500 346v8M1020 649h6M1116 648h7M1119.500 645v7" stroke="#b0b0b0" fill="none" />

      {/* U6304 and U5004 packages */}
      <rect x="596.500" y="312.500" width="37" height="54" fill="none" stroke="#b4b4b4" />
      {[598, 610.5, 623].map((x) => <Pins key={x} x={x} y={314} n={4} dy={14} w={10} h={10} />)}
      <rect x="647" y="427" width="44" height="41" fill={G} />
      <Pins x={648} y={417} n={11} dx={4} w={3} h={8} /><Pins x={648} y={469} n={11} dx={4} w={3} h={8} />
      <Pins x={638} y={427} n={10} dy={4.2} w={8} h={3} /><Pins x={692} y={427} n={10} dy={4.2} w={8} h={3} />
      <path d="M642 424v-4h4M696 420h4v4M700 472v5h-4M646 477h-4v-5" fill="none" stroke={G} />

      {/* ball grid arrays */}
      <g fill="none" stroke="#d4d4d4">
        <path d="M584.500 522.500h126v142h-126zM794.500 405.500h73v74h-73zM715.500 531.500h138v137h-138zM936.500 533.500h61v69h-61z" />
      </g>
      <path d="M582 534v-13h14M710 522v10M584 655v10h12M700 664h10v-10M714 542v-12h12M842 531h11v12M713 660v11h12M842 669h11v-13M793 412v-6h8M860 405h7v8M792 471v9h8M860 479h7v-7M944 393v-5M965 388h7v5M936 540v-7h7M990 533h7v7M936 596v6h6" fill="none" stroke="#b4b4b4" />
      <Balls x={612} y={537} cols={14} rows={22} step={5.35} r={1.9} keep={memKeep} />
      <Balls x={719} y={536} cols={31} rows={31} step={4.3} r={1.8} keep={socKeep} />
      <Balls x={798} y={409} cols={18} rows={18} step={3.95} r={1.7} keep={(i, j) => noise(i + 3, j + 5) > 0.2 || i === 0 || j === 0} />
      <Balls x={940} y={538} cols={13} rows={15} step={4.25} r={1.7} keep={(i, j) => !((i === 1 || j === 1 || i === 11 || j === 13) && noise(i, j) > 0.35)} />
      <Balls x={948} y={391} cols={6} rows={6} step={4.2} />
      <Balls x={926} y={658} cols={4} rows={5} step={4.2} />
      <circle cx="938" cy="387" r="2" fill="none" stroke={G} /><circle cx="582" cy="516" r="2" fill="none" stroke={G} />

      {/* U3205 package */}
      {[1095, 1109, 1124].map((x) => <g key={x} fill={G}><rect x={x} y="560" width="13" height="12" /><rect x={x} y="574" width="13" height="12" /><rect x={x} y="588" width="13" height="12" /></g>)}
      <Pins x={1085} y={549} n={12} dx={5.4} w={3} h={8} /><Pins x={1085} y={602} n={12} dx={5.4} w={3} h={8} />
      <Pins x={1085} y={561} n={8} dy={5.2} w={8} h={3} /><Pins x={1139} y={561} n={8} dy={5.2} w={8} h={3} />

      {/* flex connectors */}
      <g fill="none" stroke={G}>
        <path d="M917.500 424.500h79v29h-79zM1007.500 428V463.500h95.500V428M1007 431.500h96M1108.500 414.500h93v29h-93zM1177.500 485.500h31v134h-31z" />
        <path d="M1001 713h14V657.500h105V713h14" stroke="#b4b4b4" strokeWidth="1.500" />
        <path d="M1000.500 643V715.500h135V643" stroke="#e4e4e4" />
        <rect x="1203.500" y="399.500" width="13" height="10" rx="5" />
      </g>
      <g fill={G}>
        {[[917, 423], [985, 423], [917, 443], [985, 443]].map(([x, y]) => <rect key={`${x}${y}`} x={x} y={y} width="12" height="12" rx="2" />)}
        {[[1108, 413], [1191, 413], [1108, 433], [1191, 433]].map(([x, y]) => <rect key={`${x}${y}`} x={x} y={y} width="12" height="12" rx="2" />)}
        {[[1177, 484], [1199, 484], [1177, 609], [1199, 609]].map(([x, y]) => <rect key={`${x}${y}`} x={x} y={y} width="10" height="12" rx="2" />)}
        {[[931, 484], [952, 484], [931, 499], [952, 499]].map(([x, y]) => <rect key={`${x}${y}`} x={x} y={y} width="11" height="10" />)}
        <path d="M1006 422h5v11h-5zM1099 422h5v11h-5zM1189 679h10v18h-10zM1207 679h10v18h-10zM1200 673h6v5h-6zM1200 697h6v5h-6z" />
      </g>
      <path d="M934 487h26v20h-26zM1191 679.500h24v17h-24z" fill="none" stroke={G} />
      <Pins x={931} y={424} n={12} dx={4.3} w={3} h={5} /><Pins x={931} y={449} n={12} dx={4.3} w={3} h={5} />
      <Pins x={1014} y={420} n={14} dx={6.2} w={4} h={11} /><Pins x={1017} y={452} n={11} dx={7} w={4} h={9} />
      <Pins x={1123} y={413} n={15} dx={4.3} w={3} h={6} /><Pins x={1123} y={438} n={15} dx={4.3} w={3} h={6} />
      <Pins x={1177} y={498} n={25} dy={4.4} w={6} h={3} /><Pins x={1202} y={498} n={25} dy={4.4} w={6} h={3} />

      <MiniChip x={1035} y={538} w={22} h={17} /><MiniChip x={1030} y={557} w={22} h={16} /><MiniChip x={1035} y={578} w={22} h={16} />
      <MiniChip x={1033} y={597} w={16} h={20} /><MiniChip x={1012} y={608} w={17} h={21} /><MiniChip x={874} y={553} w={22} h={20} />
      <MiniChip x={985} y={477} w={13} h={9} /><MiniChip x={986} y={493} w={10} h={13} /><MiniChip x={999} y={493} w={10} h={13} />
      <MiniChip x={1014} y={502} w={12} h={10} /><MiniChip x={1037} y={513} w={12} h={9} /><MiniChip x={600} y={382} w={18} h={18} />
      <MiniChip x={573} y={430} w={18} h={22} /><MiniChip x={577} y={472} w={15} h={10} /><MiniChip x={611} y={468} w={13} h={15} /><MiniChip x={1111} y={491} w={13} h={13} />
      <rect x="1053" y="490" width="12" height="12" fill={G} />
      <Pins x={1051} y={485} n={5} dx={4} w={2} h={4} /><Pins x={1051} y={503} n={5} dx={4} w={2} h={4} />
      <Pins x={1048} y={488} n={5} dy={4} w={4} h={2} /><Pins x={1067} y={488} n={5} dy={4} w={4} h={2} />

      {/* reference designators */}
      <g fill="#d6d6d6">
        {small.map((l, i) => l.v ? <rect key={i} x={l.x - 2.5} y={l.y - 6} width="5" height="12" /> : <rect key={i} x={l.x - 6} y={l.y - 2.5} width="12" height="5" />)}
        {big.map(([x, y, s, v], i) => {
          const z = +s;
          if (z > 8) return null;
          const w = z * 2.6;
          return v === '1' ? <rect key={i} x={+x - z / 2} y={+y - w / 2} width={z} height={w} opacity=".8" /> : <rect key={i} x={+x - w / 2} y={+y - z / 2} width={w} height={z} opacity=".8" />;
        })}
      </g>
      <g fill="#111" fontWeight="500">
        {small.map((l, i) => <Label key={i} x={l.x} y={l.y} s={5} v={l.v} t={l.t} />)}
        {big.map(([x, y, s, v, t], i) => <Label key={i} x={+x} y={+y} s={+s} v={v === '1'} t={t} />)}
      </g>
      <g fill="#333">
        {([[558, 496, 'H2'], [566, 688, 'H3'], [911, 480, 'H4'], [962, 696, 'H6'], [1165, 696, 'H5'], [606, 289, 'MARK6001'], [1217, 667, 'MARK1002'], [1010, 651, 'GND'],
          [744, 291, 'LED2304'], [780, 339, 'RED+'], [899, 339, 'RED-'], [762, 397, 'L2105'], [757, 421, 'L2102'], [755, 444, 'L2101'], [765, 468, 'L2103'], [946, 497, 'X3002'],
          [1202, 688, 'J2202'], [559, 411, 'SH6002'], [914, 636, 'SH1002'], [902, 699, 'SH1001'], [885, 563, 'U6301'], [1045, 546, 'U3201'], [1040, 566, 'U3202'], [1045, 586, 'U3203'],
          [1060, 497, 'U3208'], [1117, 498, 'U2404'], [583, 477, 'U5001']] as [number, number, string][]).map(([x, y, t]) => <Label key={t} x={x} y={y} s={5} v={false} t={t} />)}
        {([[750, 333, 'LED2303'], [780, 500, 'L2106'], [609, 391, 'U6302'], [583, 440, 'U5003'], [1041, 607, 'U3204'], [1020, 619, 'U3206'], [617, 476, 'U5002']] as [number, number, string][]).map(([x, y, t]) => <Label key={t} x={x} y={y} s={5} v t={t} />)}
      </g>
      <g fill="#b4b4b4">
        {([[1013, 415, '25'], [1095, 415, '1'], [1118, 407, '30'], [1194, 407, '16'], [1194, 451, '15'], [1113, 461, '1'], [918, 418, '13'], [1001, 427, '24'], [919, 460, '12'],
          [1001, 450, '1'], [1180, 478, '1'], [1204, 477, '50'], [1190, 624, '25'], [1203, 624, '26']] as [number, number, string][]).map(([x, y, t], i) => <Label key={i} x={x} y={y} s={9} v={false} t={t} />)}
      </g>
    </svg>
  );
}

function Viewer() {
  return (
    <main className="flex min-w-0 flex-1 flex-col bg-[#eeeff0]">
      <DocTabs />
      <Toolbar />
      <div className="flex min-h-0 flex-1 bg-[#999] pb-[2px]">
        <div className="flex min-w-0 flex-1 justify-center">
          <div className="h-full w-[951px] max-w-full bg-white"><Board /></div>
        </div>
        <div className="flex w-[15px] shrink-0 flex-col bg-[#f5f5f5]">
          <ArrowButton />
          <div className="flex grow-[320] basis-0 items-center justify-center border border-[#b8b8b8] bg-[#dcdcdc]"><Grip /></div>
          <div className="grow-[322] basis-0 border-l border-[#d0d0d0]" />
          <ArrowButton down />
        </div>
      </div>
    </main>
  );
}

export default function App() {
  return (
    <div className="flex h-screen flex-col overflow-hidden border-r border-[#65cae8] bg-[#65cae8] font-['DejaVu_Sans_Mono',monospace] text-black">
      <TitleBar />
      <Banner />
      <div className="flex min-h-0 flex-1"><Sidebar /><Viewer /></div>
      <footer className="flex h-5 shrink-0 items-center justify-between border-t border-[#9db4c2] bg-[#42678b] pt-[6px] text-[10px] leading-4">
        <span className="text-[#0b1a28]">Version:1.0.0.52</span>
        <span className="text-white">Current [i375_Main_PCB_10L_V1.1]</span>
      </footer>
      <div className="h-[3px] shrink-0" />
    </div>
  );
}
